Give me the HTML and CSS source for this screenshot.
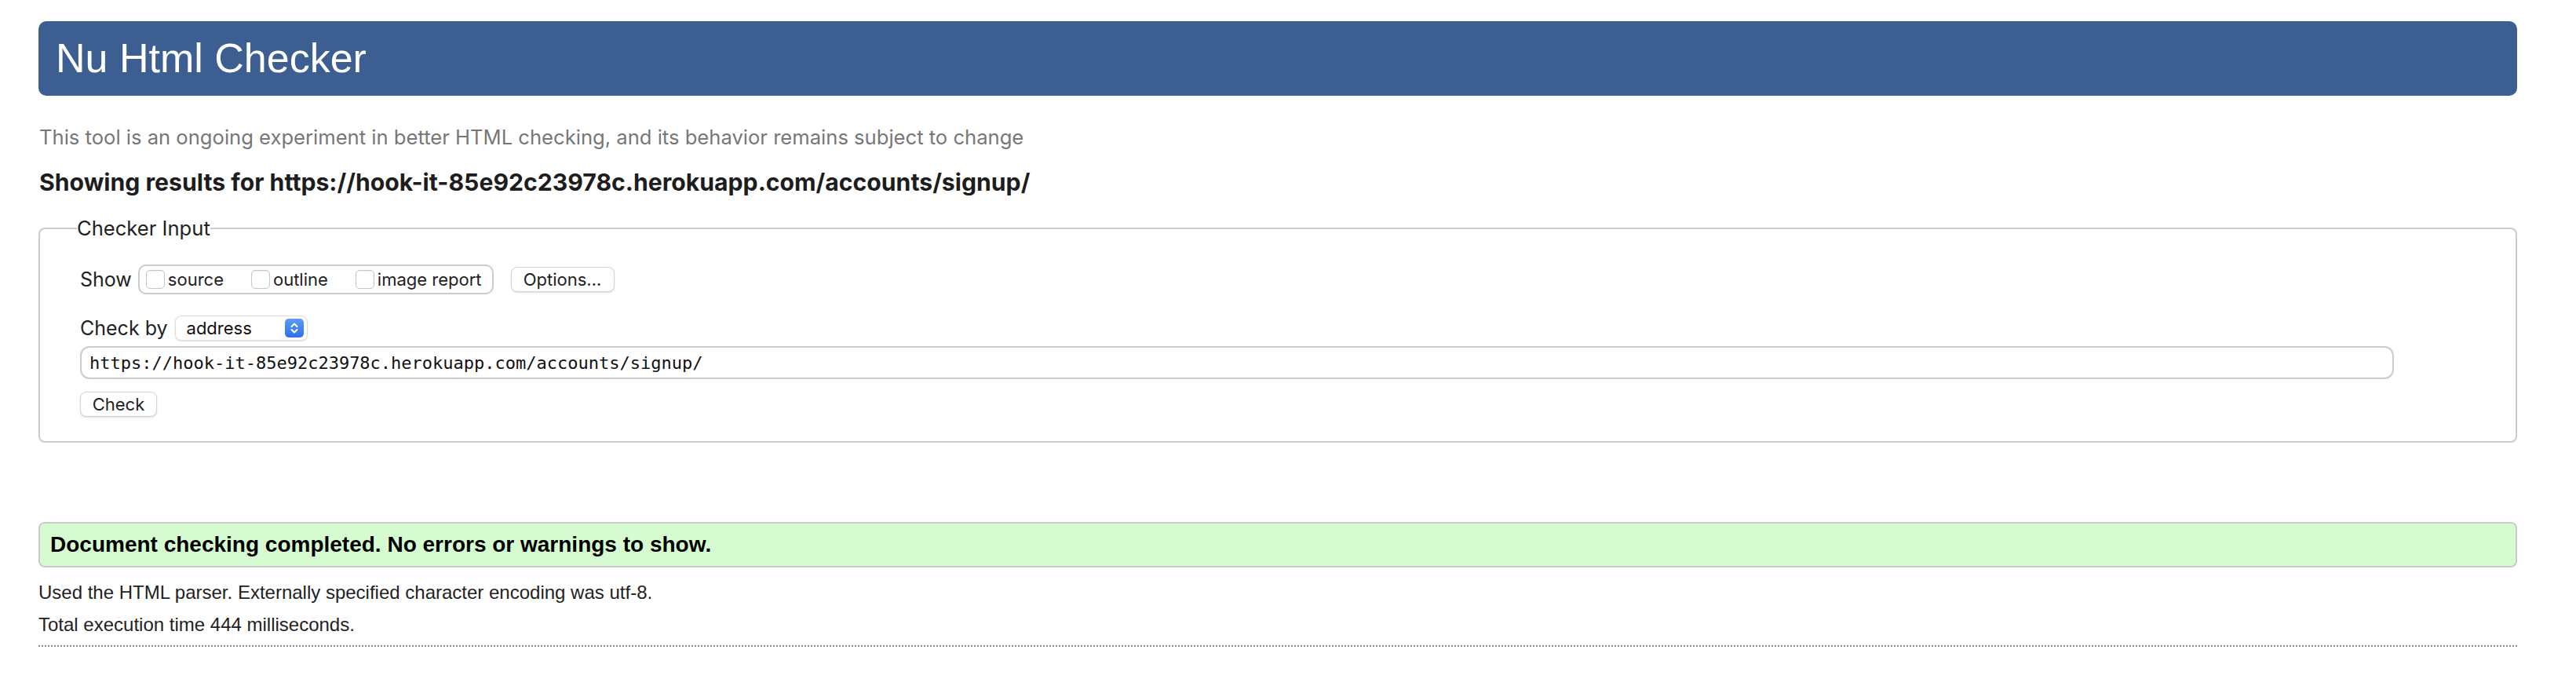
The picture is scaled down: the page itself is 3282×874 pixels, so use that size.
FILE: index.html
```html
<!DOCTYPE html>
<html lang="en">
<head>
<meta charset="utf-8">
<title>Nu Html Checker</title>
<link rel="stylesheet" href="styles.css">
</head>
<body>
<div class="page">
  <h1 class="title">Nu Html Checker</h1>
  <p class="tagline">This tool is an ongoing experiment in better HTML checking, and its behavior remains subject to change</p>
  <p class="results-for">Showing results for https://hook-it-85e92c23978c.herokuapp.com/accounts/signup/</p>
  <form class="checker-form">
    <fieldset class="input-box">
      <legend class="legend">Checker Input</legend>
      <div class="row row-show">
        <span class="label">Show</span>
        <div class="toggles">
          <label class="toggle"><input class="check" type="checkbox"><span>source</span></label>
          <label class="toggle"><input class="check" type="checkbox"><span>outline</span></label>
          <label class="toggle"><input class="check" type="checkbox"><span>image report</span></label>
        </div>
        <button type="button" class="btn btn-options">Options…</button>
      </div>
      <div class="row row-by">
        <span class="label">Check by</span>
        <div class="select">
          <span class="select-text">address</span>
          <span class="stepper">
            <svg width="24" height="24" viewBox="0 0 24 24" fill="none" stroke="#fff" stroke-width="2" stroke-linecap="round" stroke-linejoin="round"><path d="M8.5 10 L12 6.5 L15.5 10"/><path d="M8.5 14 L12 17.5 L15.5 14"/></svg>
          </span>
        </div>
      </div>
      <input class="url" type="text" value="https://hook-it-85e92c23978c.herokuapp.com/accounts/signup/">
      <div class="row row-submit">
        <button type="button" class="btn btn-check">Check</button>
      </div>
    </fieldset>
  </form>
  <p class="success">Document checking completed. No errors or warnings to show.</p>
  <p class="details">Used the HTML parser. Externally specified character encoding was utf-8.</p>
  <p class="details">Total execution time 444 milliseconds.</p>
  <hr class="end-rule">
</div>
</body>
</html>
```

FILE: styles.css
```css
html, body {
  margin: 0;
  padding: 0;
  background: #ffffff;
}

body {
  font-family: "Liberation Sans", Arial, sans-serif;
  color: #222;
}

.page {
  padding: 27px 75px 0 49px;
}

.title {
  margin: 0;
  height: 95px;
  line-height: 95px;
  padding-left: 22px;
  background: #3d5e90;
  color: #fff;
  border-radius: 10px;
  font-family: "Liberation Sans", Arial, sans-serif;
  font-weight: normal;
  font-size: 52px;
}

.tagline {
  margin: 38px 0 0 1px;
  font-family: Inter, "Liberation Sans", sans-serif;
  font-size: 25.6px;
  line-height: 30px;
  color: #777;
}

.results-for {
  margin: 24px 0 0 1px;
  font-family: Inter, "Liberation Sans", sans-serif;
  font-weight: bold;
  font-size: 30.2px;
  line-height: 36px;
  color: #1d1d20;
}

.checker-form {
  margin: 26px 0 0 0;
}

.input-box {
  margin: 0;
  padding: 31px 0 31px 51px;
  border: 2px solid #cbcbcb;
  border-radius: 8px;
  min-width: 0;
}

.legend {
  margin-left: -4px;
  padding: 0;
  font-family: Inter, "Liberation Sans", sans-serif;
  font-size: 25.6px;
  line-height: 30px;
  color: #222;
}

.row {
  display: flex;
  align-items: center;
}

.row-show {
  height: 38px;
}

.row-by {
  margin-top: 27px;
  height: 32px;
}

.row-submit {
  margin-top: 16px;
}

.label {
  font-family: Inter, "Liberation Sans", sans-serif;
  font-size: 25px;
  color: #222;
}

.toggles {
  display: flex;
  align-items: center;
  gap: 35px;
  box-sizing: border-box;
  height: 38px;
  margin-left: 8px;
  padding: 0 13px 0 8px;
  border: 2px solid #cbcbcb;
  border-radius: 10px;
}

.toggle {
  display: flex;
  align-items: center;
  font-family: Inter, "Liberation Sans", sans-serif;
  font-size: 22px;
  color: #222;
}

.check {
  -webkit-appearance: none;
  appearance: none;
  box-sizing: border-box;
  width: 24px;
  height: 24px;
  margin: 0 4px 0 0;
  border: 1px solid #c6c6c6;
  border-radius: 5px;
  background: #fff;
  box-shadow: inset 0 1px 1px rgba(0, 0, 0, 0.06);
}

.btn {
  box-sizing: border-box;
  height: 32px;
  padding: 0 14px;
  border: 1px solid #d4d4d4;
  border-radius: 8px;
  background: #fff;
  box-shadow: 0 1px 2px rgba(0, 0, 0, 0.14);
  font-family: Inter, "Liberation Sans", sans-serif;
  font-size: 22px;
  color: #222;
}

.btn-options {
  margin-left: 22px;
  width: 132px;
}

.btn-check {
  width: 98px;
}

.select {
  box-sizing: border-box;
  display: flex;
  align-items: center;
  justify-content: space-between;
  width: 169px;
  height: 32px;
  margin-left: 9px;
  padding: 0 4px 0 14px;
  border: 1px solid #dcdcdc;
  border-radius: 8px;
  background: #fff;
  box-shadow: 0 1px 2px rgba(0, 0, 0, 0.12);
}

.select-text {
  font-family: Inter, "Liberation Sans", sans-serif;
  font-size: 22px;
  color: #111;
}

.stepper {
  display: flex;
  width: 24px;
  height: 24px;
  border-radius: 5px;
  background: linear-gradient(#5b9bf8, #2f70ec);
}

.url {
  display: block;
  box-sizing: border-box;
  width: 95%;
  height: 42px;
  margin: 7px 0 0 0;
  padding: 0 10px;
  border: 2px solid #cbcbcb;
  border-radius: 12px;
  background: #fff;
  font-family: "DejaVu Sans Mono", "Liberation Mono", monospace;
  font-size: 22px;
  color: #111;
  outline: none;
}

.success {
  box-sizing: border-box;
  margin: 101px 0 0 0;
  height: 58px;
  padding-left: 13px;
  line-height: 54px;
  border: 2px solid #cbcbcb;
  border-radius: 8px;
  background: #d6fbd0;
  font-family: "Liberation Sans", Arial, sans-serif;
  font-weight: bold;
  font-size: 28px;
  color: #000;
}

.details {
  margin: 0;
  font-family: "Liberation Sans", Arial, sans-serif;
  font-size: 24px;
  line-height: 41px;
  color: #222;
}

.success + .details {
  margin-top: 11px;
}

.end-rule {
  margin: 6px 0 0 0;
  height: 0;
  border: 0;
  border-top: 2px dotted #8a8a8a;
}
```
